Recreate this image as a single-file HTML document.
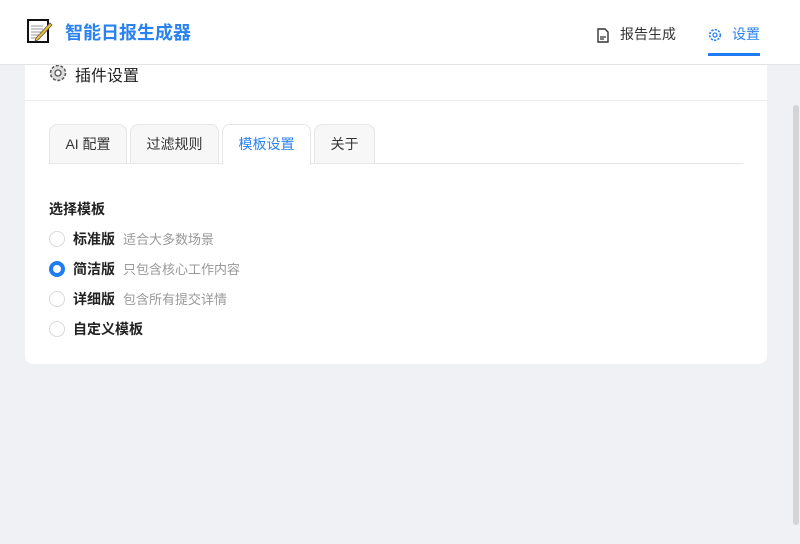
<!DOCTYPE html>
<html><head><meta charset="utf-8"><style>
*{margin:0;padding:0;box-sizing:border-box}
body{width:800px;height:544px;overflow:hidden;background:#f0f1f4;font-family:"Liberation Sans","Noto Sans CJK SC",sans-serif;position:relative;color:#222}
.hdr{position:absolute;left:0;top:0;width:800px;height:65px;background:#fff;border-bottom:1px solid #e4e4e4;z-index:2}
.logo{position:absolute;left:65px;top:19px;font-size:18px;font-weight:bold;color:#2a82f0}
.nav{position:absolute;top:24px;font-size:14px;color:#333}
.card{position:absolute;left:25px;top:40px;width:742px;height:324px;background:#fff;border-radius:8px}
.ch{position:absolute;left:0;top:0;width:742px;height:61px;border-bottom:1px solid #ececec}
.tab{position:absolute;top:84px;height:40px;border:1px solid #e6e6e6;border-bottom:none;border-radius:8px 8px 0 0;background:#f7f7f7;font-size:14px;line-height:39px;text-align:center;color:#333}
.line{position:absolute;left:24px;top:123px;width:694px;height:1px;background:#e6e6e6}
.r{position:absolute;left:24px;font-size:14px;height:18px;line-height:18px}
.r i{display:inline-block;width:16px;height:16px;border:1px solid #d9d9d9;border-radius:50%;vertical-align:top;margin:1px 8px 0 0}
.r b{color:#222}
.r span{color:#999;margin-left:8px;font-size:13px}
.sb{position:absolute;left:793px;top:105px;width:6px;height:420px;background:#d4d4d6;border-radius:3px}
</style></head><body>
<div class="card">
<div class="ch"><svg style="position:absolute;left:24px;top:24px" width="18" height="18" viewBox="0 0 18 18"><circle cx="9" cy="9" r="7.5" fill="#ddd" stroke="#555" stroke-width="1.5" stroke-dasharray="3 1.7"/><circle cx="9" cy="9" r="3" fill="#fff" stroke="#555" stroke-width="1.3"/></svg><div style="position:absolute;left:50px;top:22px;font-size:16px;color:#222">插件设置</div></div>
<div class="tab" style="left:24px;width:78px">AI 配置</div>
<div class="tab" style="left:105px;width:89px">过滤规则</div>
<div class="tab" style="left:197px;width:89px;background:#fff;color:#2a82f0;height:41px;z-index:1">模板设置</div>
<div class="tab" style="left:289px;width:61px">关于</div>
<div class="line"></div>
<div style="position:absolute;left:24px;top:159px;font-size:14px;font-weight:bold">选择模板</div>
<div class="r" style="top:190px"><i></i><b>标准版</b><span>适合大多数场景</span></div>
<div class="r" style="top:220px"><i style="border:4.5px solid #1f7cf5"></i><b>简洁版</b><span>只包含核心工作内容</span></div>
<div class="r" style="top:250px"><i></i><b>详细版</b><span>包含所有提交详情</span></div>
<div class="r" style="top:280px"><i></i><b>自定义模板</b></div>
</div>
<div class="sb"></div>
<div class="hdr">
<svg style="position:absolute;left:27px;top:18px" width="27" height="26" viewBox="0 0 27 26"><rect x="1" y="2" width="20" height="22" fill="#fff" stroke="#111" stroke-width="2"/><path d="M4 8h12M4 11h12M4 14h12M4 17h10M4 20h8" stroke="#999" stroke-width="1"/><path d="M9 20l14-15 2 2-14 15-3 1z" fill="#f5c02a" stroke="#555" stroke-width=".8"/></svg>
<div class="logo">智能日报生成器</div>
<svg style="position:absolute;left:597px;top:28px" width="12" height="15" viewBox="0 0 12 15"><path d="M1 1h7l3 3v10H1z" fill="none" stroke="#333" stroke-width="1.4"/><path d="M3 9h6M3 11h4" stroke="#333" stroke-width="1.3"/></svg>
<div class="nav" style="left:620px">报告生成</div>
<svg style="position:absolute;left:708px;top:28px" width="14" height="14" viewBox="0 0 14 14"><circle cx="7" cy="7" r="5.3" fill="none" stroke="#2a82f0" stroke-width="1.6" stroke-dasharray="2.2 1.3"/><circle cx="7" cy="7" r="2" fill="none" stroke="#2a82f0" stroke-width="1.3"/></svg>
<div class="nav" style="left:732px;color:#2a82f0">设置</div>
<div style="position:absolute;left:708px;top:53px;width:52px;height:3px;background:#1f7cf5"></div>
</div>
</body></html>
